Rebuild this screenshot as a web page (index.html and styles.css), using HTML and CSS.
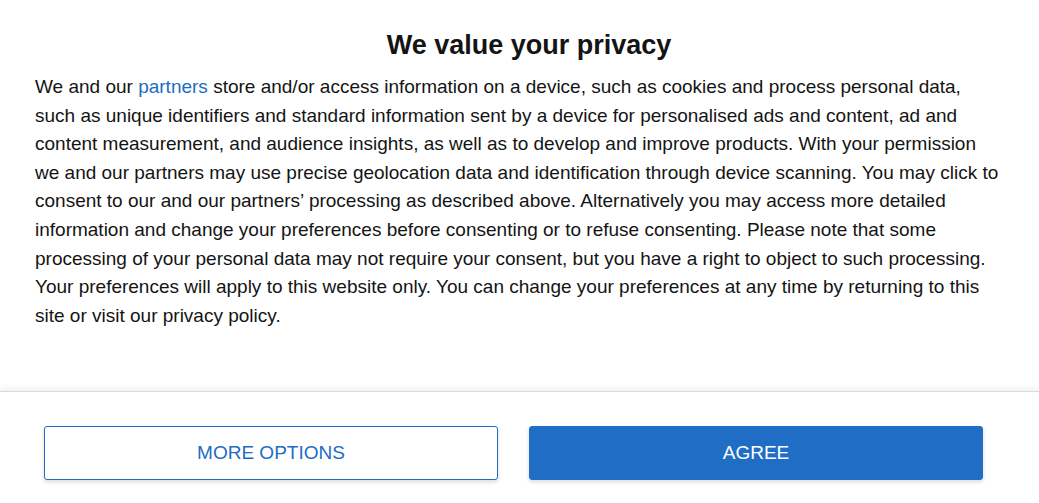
FILE: index.html
```html
<!DOCTYPE html>
<html>
<head>
<meta charset="utf-8">
<link rel="stylesheet" href="styles.css">
</head>
<body>
<div class="dialog">
  <div class="content">
    <h1 class="title">We value your privacy</h1>
    <p class="text">We and our <a class="link" href="#">partners</a> store and/or access information on a device, such as cookies and process personal data, such as unique identifiers and standard information sent by a device for personalised ads and content, ad and content measurement, and audience insights, as well as to develop and improve products. With your permission we and our partners may use precise geolocation data and identification through device scanning. You may click to consent to our and our partners’ processing as described above. Alternatively you may access more detailed information and change your preferences before consenting or to refuse consenting. Please note that some processing of your personal data may not require your consent, but you have a right to object to such processing. Your preferences will apply to this website only. You can change your preferences at any time by returning to this site or visit our privacy policy.</p>
  </div>
  <div class="footer">
    <button class="btn btn-outline">MORE OPTIONS</button>
    <button class="btn btn-primary">AGREE</button>
  </div>
</div>
</body>
</html>
```
FILE: styles.css
```css
html, body {
  margin: 0;
  padding: 0;
  background: #ffffff;
}
body {
  font-family: "Liberation Sans", Arial, sans-serif;
  color: #141414;
  width: 1039px;
  height: 503px;
  overflow: hidden;
}
.dialog {
  display: flex;
  flex-direction: column;
  height: 503px;
}
.content {
  flex: 1;
  padding: 29px 35px 0 35px;
}
.title {
  margin: 0;
  padding-left: 19px;
  font-size: 27px;
  font-weight: bold;
  text-align: center;
  line-height: 32px;
  color: #141414;
}
.text {
  margin: 12px 0 0 0;
  font-size: 19px;
  line-height: 28.6px;
}
.link {
  color: #206dc5;
  text-decoration: none;
}
.footer {
  height: 112px;
  box-sizing: border-box;
  border-top: 1px solid #d9d9d9;
  box-shadow: 0 -3px 6px rgba(0,0,0,0.06);
  display: flex;
  justify-content: flex-start;
  gap: 31px;
  padding: 34px 0 0 44px;
}
.btn {
  width: 454px;
  height: 54px;
  border-radius: 3px;
  font-family: "Liberation Sans", Arial, sans-serif;
  font-size: 19px;
  cursor: pointer;
  box-shadow: 0 2px 4px rgba(0,0,0,0.15);
}
.btn-outline {
  background: #ffffff;
  border: 1px solid #206dc5;
  color: #206dc5;
}
.btn-primary {
  background: #206dc5;
  border: 1px solid #206dc5;
  color: #ffffff;
}
```
